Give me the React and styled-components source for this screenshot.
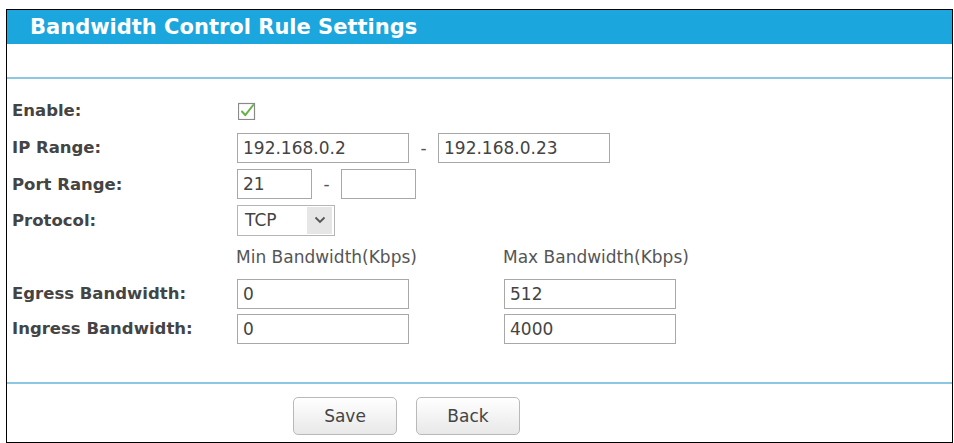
import React from "react";
import styled, { createGlobalStyle } from "styled-components";

const GlobalStyle = createGlobalStyle`
  body {
    margin: 0;
    background: #ffffff;
    font-family: "DejaVu Sans", Verdana, sans-serif;
  }
`;

function CheckIcon() {
  return (
    <svg width="18" height="18" viewBox="0 0 18 18">
      <rect x="0.5" y="1.5" width="16" height="16" fill="#fff" stroke="#8a8a8a" strokeWidth="1.2" />
      <path d="M4 9.5 L7.3 13.2 L15.2 3" fill="none" stroke="#62b444" strokeWidth="2" strokeLinecap="round" strokeLinejoin="round" />
    </svg>
  );
}

function Chevron() {
  return (
    <svg width="12" height="8" viewBox="0 0 12 8">
      <path d="M1.5 1.5 L6 6 L10.5 1.5" fill="none" stroke="#555" strokeWidth="1.8" />
    </svg>
  );
}

function App() {
  return (
    <Page>
      <GlobalStyle />
      <Panel>
        <Header>Bandwidth Control Rule Settings</Header>
        <HeaderGap />
        <Divider />
        <Form>
          <Row h={37}>
            <Label>Enable:</Label>
            <CheckWrap>
              <CheckIcon />
            </CheckWrap>
          </Row>
          <Row h={37}>
            <Label>IP Range:</Label>
            <Field>
              <Input w={172} defaultValue="192.168.0.2" />
              <Dash>-</Dash>
              <Input w={172} defaultValue="192.168.0.23" />
            </Field>
          </Row>
          <Row h={36}>
            <Label>Port Range:</Label>
            <Field>
              <Input w={75} defaultValue="21" />
              <Dash>-</Dash>
              <Input w={75} defaultValue="" />
            </Field>
          </Row>
          <Row h={36}>
            <Label>Protocol:</Label>
            <Select>
              <SelectValue>TCP</SelectValue>
              <SelectArrow>
                <Chevron />
              </SelectArrow>
            </Select>
          </Row>
          <Row h={38}>
            <span />
            <BandGrid>
              <ColHead>Min Bandwidth(Kbps)</ColHead>
              <ColHead>Max Bandwidth(Kbps)</ColHead>
            </BandGrid>
          </Row>
          <Row h={35}>
            <Label>Egress Bandwidth:</Label>
            <BandGrid>
              <Input w={172} defaultValue="0" />
              <Input w={172} defaultValue="512" />
            </BandGrid>
          </Row>
          <Row h={35}>
            <Label>Ingress Bandwidth:</Label>
            <BandGrid>
              <Input w={172} defaultValue="0" />
              <Input w={172} defaultValue="4000" />
            </BandGrid>
          </Row>
        </Form>
        <Divider />
        <Footer>
          <Button>Save</Button>
          <Button>Back</Button>
        </Footer>
      </Panel>
    </Page>
  );
}

export default App;

const Page = styled.div`
  padding: 9px 0 0 6px;
`;

const Panel = styled.div`
  box-sizing: border-box;
  width: 947px;
  height: 434px;
  border: 1px solid #000;
  display: flex;
  flex-direction: column;
`;

const Header = styled.div`
  height: 34px;
  background: #1ba6de;
  color: #ffffff;
  font-family: "DejaVu Sans", Verdana, sans-serif;
  font-weight: bold;
  font-size: 21px;
  display: flex;
  align-items: center;
  padding-left: 23px;
`;

const HeaderGap = styled.div`
  height: 33px;
`;

const Divider = styled.div`
  height: 2px;
  background: #8cc8e4;
`;

const Form = styled.div`
  flex: 1;
  padding: 13px 0 0 5px;
`;

const Row = styled.div`
  display: grid;
  grid-template-columns: 225px 1fr;
  align-items: center;
  height: ${(p) => p.h}px;
`;

const Label = styled.span`
  font-weight: bold;
  font-size: 16.5px;
  color: #444;
  white-space: nowrap;
`;

const CheckWrap = styled.span`
  display: flex;
  padding-left: 1px;
`;

const Field = styled.div`
  display: flex;
  align-items: center;
`;

const Input = styled.input`
  box-sizing: border-box;
  width: ${(p) => p.w}px;
  height: 30px;
  border: 1px solid #a8a8a8;
  padding: 0 5px;
  font-family: "DejaVu Sans", Verdana, sans-serif;
  font-size: 17px;
  color: #444;
  outline: none;
  margin: 0;
`;

const Dash = styled.span`
  width: 29px;
  text-align: center;
  font-size: 17px;
  color: #555;
`;

const Select = styled.div`
  box-sizing: border-box;
  width: 98px;
  height: 31px;
  border: 1px solid #b5b5b5;
  display: flex;
  align-items: stretch;
  justify-content: space-between;
  padding: 1px 2px 1px 0;
`;

const SelectValue = styled.span`
  display: flex;
  align-items: center;
  padding-left: 7px;
  font-size: 17px;
  color: #444;
`;

const SelectArrow = styled.span`
  width: 25px;
  background: #e6e6e6;
  display: flex;
  align-items: center;
  justify-content: center;
`;

const BandGrid = styled.div`
  display: grid;
  grid-template-columns: 267px 172px;
  align-items: center;
`;

const ColHead = styled.span`
  font-size: 17px;
  color: #555;
  margin-left: -1px;
  white-space: nowrap;
`;

const Footer = styled.div`
  height: 58px;
  display: flex;
  align-items: center;
  gap: 19px;
  padding-left: 286px;
`;

const Button = styled.button`
  box-sizing: border-box;
  width: 104px;
  height: 38px;
  border: 1px solid #b9b9b9;
  border-radius: 5px;
  background: linear-gradient(#ffffff, #e8e8e8);
  font-family: "DejaVu Sans", Verdana, sans-serif;
  font-size: 17px;
  color: #444;
  margin-top: 6px;
`;
